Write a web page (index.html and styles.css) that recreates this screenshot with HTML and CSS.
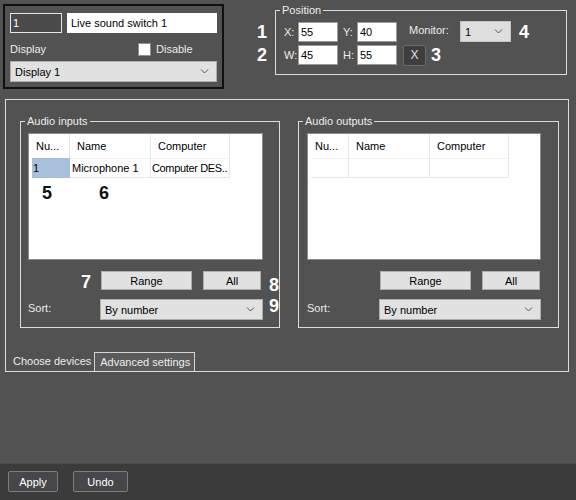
FILE: index.html
```html
<!DOCTYPE html>
<html lang="en">
<head>
    <meta charset="UTF-8">
    <title>Live sound switch</title>
    <link rel="stylesheet" href="styles.css">
</head>
<body>
    <div class="window">
        <div class="top">
            <div class="ident">
                <div class="row">
                    <input class="id-field" type="text" value="1">
                    <input class="name-field" type="text" value="Live sound switch 1">
                </div>
                <div class="row display-row">
                    <span>Display</span>
                    <label class="check"><span class="box"></span>Disable</label>
                </div>
                <div class="select display-select">
                    <span>Display 1</span>
                    <svg width="9" height="5" viewBox="0 0 9 5"><polyline points="1,0.5 4.5,4 8,0.5" fill="none" stroke="#555" stroke-width="1"/></svg>
                </div>
            </div>

            <fieldset class="position">
                <legend>Position</legend>
                <div class="pos-row">
                    <span class="pos-label">X:</span>
                    <input class="num" type="text" value="55">
                    <span class="pos-label second">Y:</span>
                    <input class="num" type="text" value="40">
                    <span class="monitor-label">Monitor:</span>
                    <div class="select monitor-select">
                        <span>1</span>
                        <svg width="9" height="5" viewBox="0 0 9 5"><polyline points="1,0.5 4.5,4 8,0.5" fill="none" stroke="#555" stroke-width="1"/></svg>
                    </div>
                </div>
                <div class="pos-row">
                    <span class="pos-label">W:</span>
                    <input class="num" type="text" value="45">
                    <span class="pos-label second">H:</span>
                    <input class="num" type="text" value="55">
                    <button class="x-btn">X</button>
                </div>
            </fieldset>
        </div>

        <div class="panel">
            <div class="groups">
                <fieldset class="group inputs">
                    <legend>Audio inputs</legend>
                    <div class="list">
                        <div class="cols head">
                            <div class="cell first">Nu...</div>
                            <div class="cell">Name</div>
                            <div class="cell">Computer</div>
                        </div>
                        <div class="cols data">
                            <div class="cell selected">1</div>
                            <div class="cell">Microphone 1</div>
                            <div class="cell tight">Computer DES..</div>
                        </div>
                    </div>
                    <div class="btn-row">
                        <button class="btn range">Range</button>
                        <button class="btn all">All</button>
                    </div>
                    <div class="sort-row">
                        <span class="sort-label">Sort:</span>
                        <div class="select sort-select">
                            <span>By number</span>
                            <svg width="9" height="5" viewBox="0 0 9 5"><polyline points="1,0.5 4.5,4 8,0.5" fill="none" stroke="#555" stroke-width="1"/></svg>
                        </div>
                    </div>
                </fieldset>

                <fieldset class="group outputs">
                    <legend>Audio outputs</legend>
                    <div class="list">
                        <div class="cols head">
                            <div class="cell first">Nu...</div>
                            <div class="cell">Name</div>
                            <div class="cell">Computer</div>
                        </div>
                        <div class="cols data">
                            <div class="cell"></div>
                            <div class="cell"></div>
                            <div class="cell"></div>
                        </div>
                    </div>
                    <div class="btn-row">
                        <button class="btn range">Range</button>
                        <button class="btn all">All</button>
                    </div>
                    <div class="sort-row">
                        <span class="sort-label">Sort:</span>
                        <div class="select sort-select">
                            <span>By number</span>
                            <svg width="9" height="5" viewBox="0 0 9 5"><polyline points="1,0.5 4.5,4 8,0.5" fill="none" stroke="#555" stroke-width="1"/></svg>
                        </div>
                    </div>
                </fieldset>
            </div>

            <div class="tabs">
                <span class="tab active">Choose devices</span>
                <span class="tab">Advanced settings</span>
            </div>
        </div>

        <div class="footer">
            <button class="foot-btn apply">Apply</button>
            <button class="foot-btn undo">Undo</button>
        </div>

        <!-- callout numbers -->
        <b class="mark m1">1</b>
        <b class="mark m2">2</b>
        <b class="mark m3">3</b>
        <b class="mark m4">4</b>
        <b class="mark dark m5">5</b>
        <b class="mark dark m6">6</b>
        <b class="mark m7">7</b>
        <b class="mark m8">8</b>
        <b class="mark m9">9</b>
    </div>
</body>
</html>
```

FILE: styles.css
```css
body {
    margin: 0;
    background-color: #525252;
    font-family: 'Liberation Sans', Arial, sans-serif;
    font-size: 11px;
    color: #ececec;
}
.window {
    position: relative;
    width: 576px;
    height: 500px;
    display: flex;
    flex-direction: column;
    overflow: hidden;
}
input, button {
    font-family: inherit;
    font-size: 11px;
    box-sizing: border-box;
    margin: 0;
    outline: none;
}
.top {
    display: flex;
    height: 99px;
    align-items: flex-start;
}
.ident {
    margin: 4px 0 0 3px;
    width: 221px;
    height: 85px;
    box-sizing: border-box;
    border: 2px solid #101010;
    padding: 7px 0 0 5px;
}
.row {
    display: flex;
    align-items: center;
}
.id-field {
    width: 52px;
    height: 20px;
    background-color: #4b4b4b;
    border: 1px solid #e6e6e6;
    color: #fff;
    padding: 0 2px;
}
.name-field {
    width: 150px;
    height: 20px;
    margin-left: 5px;
    background-color: #fff;
    border: 1px solid #fff;
    color: #000;
    padding: 0 3px;
}
.display-row {
    justify-content: space-between;
    width: 206px;
    height: 14px;
    margin-top: 9px;
}
.check {
    display: flex;
    align-items: center;
    width: 78px;
}
.check .box {
    width: 11px;
    height: 11px;
    background-color: #fff;
    border: 1px solid #8e8e8e;
    margin-right: 5px;
}
.select {
    display: flex;
    align-items: center;
    justify-content: space-between;
    box-sizing: border-box;
    background-color: #e1e1e1;
    border: 1px solid #adadad;
    color: #000;
    padding: 0 7px 0 4px;
}
.display-select {
    width: 207px;
    height: 21px;
    margin-top: 5px;
}

/* group boxes */
fieldset {
    margin: 0;
    border: 1px solid #dcdcdc;
    min-width: 0;
    box-sizing: border-box;
}
legend {
    line-height: 14px;
    padding: 0 2px;
    color: #ececec;
}
.position {
    margin: 3px 0 0 51px;
    width: 292px;
    padding: 5px 8px 9px 8px;
}
.position legend {
    margin-left: -4px;
}
.pos-row {
    display: flex;
    align-items: center;
    height: 20px;
}
.pos-row + .pos-row {
    margin-top: 3px;
}
.pos-label {
    width: 14px;
}
.pos-label.second {
    margin-left: 5px;
}
.num {
    width: 40px;
    height: 20px;
    border: 1px solid #9a9a9a;
    background-color: #fff;
    color: #000;
    padding: 0 2px;
}
.monitor-label {
    margin-left: 12px;
    width: 51px;
    margin-top: -4px;
}
.monitor-select {
    width: 51px;
    height: 21px;
    margin-top: -1px;
    border-color: #c4c4c4;
    background-color: #dedede;
}
.x-btn {
    margin-left: 6px;
    width: 23px;
    height: 21px;
    background-color: #3e3e40;
    border: 1px solid #6a6a6a;
    border-radius: 2px;
    color: #e0e0e0;
    font-size: 12px;
    padding: 0;
}

/* main panel */
.panel {
    margin: 0 7px 0 5px;
    height: 273px;
    box-sizing: border-box;
    border: 1px solid #dcdcdc;
    padding: 14px 0 0 14px;
    display: flex;
    flex-direction: column;
}
.groups {
    display: flex;
    gap: 18px;
}
.group {
    padding: 5px 0 7px 7px;
}
.group.inputs {
    width: 260px;
}
.group.outputs {
    width: 261px;
    padding-left: 8px;
}
.group.inputs legend {
    margin-left: -3px;
}
.group.outputs legend {
    margin-left: -4px;
}
.list {
    height: 127px;
    box-sizing: border-box;
    background-color: #fff;
    border: 1px solid #8c8c8c;
    color: #000;
    padding-left: 3px;
}
.inputs .list {
    width: 235px;
}
.outputs .list {
    width: 234px;
}
.cols {
    display: grid;
    grid-template-columns: 38px 81px 79px;
}
.cell {
    border-right: 1px solid #e6e6e6;
    white-space: nowrap;
    overflow: hidden;
}
.head .cell {
    height: 24px;
    line-height: 24px;
    padding-left: 7px;
}
.head .cell.first {
    padding-left: 4px;
}
.data .cell {
    height: 18px;
    line-height: 18px;
    padding-left: 2px;
    border-bottom: 1px solid #e6e6e6;
    border-top: 1px solid #f0f0f0;
}
.data .cell.tight {
    padding-left: 1px;
    letter-spacing: -0.35px;
}
.data .cell.selected {
    background-color: #a8c0db;
    padding-left: 1px;
    border-color: #a8c0db;
}
.btn-row {
    display: flex;
    margin-top: 11px;
    padding-left: 73px;
    gap: 11px;
}
.btn {
    height: 19px;
    background-color: #e1e1e1;
    border: 1px solid #adadad;
    color: #000;
    padding: 0;
}
.btn.range {
    width: 91px;
}
.btn.all {
    width: 58px;
}
.sort-row {
    display: flex;
    align-items: center;
    margin-top: 9px;
}
.sort-label {
    width: 72px;
    margin-top: -4px;
}
.sort-select {
    width: 163px;
    height: 21px;
}
.outputs .sort-select {
    width: 162px;
}
.tabs {
    margin-top: auto;
    display: flex;
    align-items: stretch;
    height: 19px;
    margin-left: -7px;
}
.tab {
    line-height: 18px;
    box-sizing: border-box;
}
.tab + .tab {
    margin-left: 3px;
    width: 101px;
    border: 1px solid #d4d4d4;
    border-bottom: none;
    background-color: #5b5b5b;
    padding-left: 5px;
}

/* footer */
.footer {
    margin-top: auto;
    height: 37px;
    box-sizing: border-box;
    background-color: #3c3b3c;
    border-top: 1px solid #4a4a4a;
    padding: 7px 0 0 8px;
    display: flex;
    gap: 15px;
}
.foot-btn {
    height: 21px;
    background-color: #47474b;
    border: 1px solid #7d7d7d;
    border-radius: 2px;
    color: #fff;
    padding: 0;
}
.foot-btn.apply {
    width: 50px;
}
.foot-btn.undo {
    width: 55px;
}

/* callouts */
.mark {
    position: absolute;
    font-size: 18px;
    line-height: 18px;
    font-weight: bold;
    color: #fff;
}
.mark.dark {
    color: #111;
}
.m1 { left: 257px; top: 23px; }
.m2 { left: 257px; top: 46px; }
.m3 { left: 431px; top: 46px; }
.m4 { left: 519px; top: 23px; }
.m5 { left: 42px; top: 184px; }
.m6 { left: 99px; top: 184px; }
.m7 { left: 81px; top: 273px; }
.m8 { left: 269px; top: 276px; }
.m9 { left: 269px; top: 297px; }
```
